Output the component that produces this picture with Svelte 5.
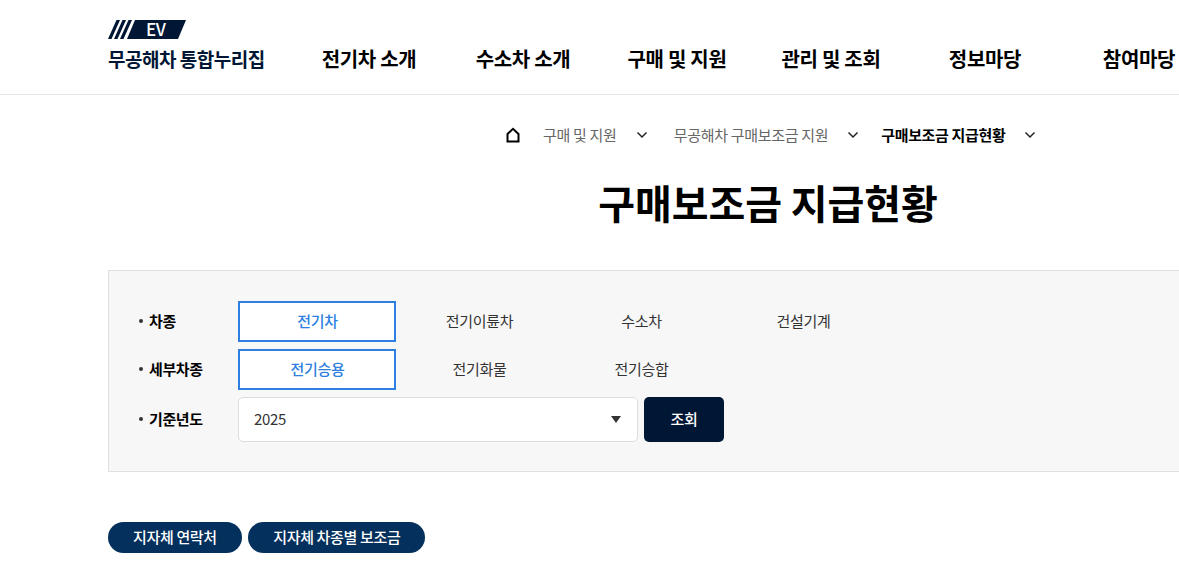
<script lang="ts">
  const menus = ["전기차 소개", "수소차 소개", "구매 및 지원", "관리 및 조회", "정보마당", "참여마당"];

  const crumbs = [
    { label: "구매 및 지원" },
    { label: "무공해차 구매보조금 지원" },
    { label: "구매보조금 지급현황", current: true },
  ];

  const kinds = ["전기차", "전기이륜차", "수소차", "건설기계"];
  const subKinds = ["전기승용", "전기화물", "전기승합"];
  const links = ["지자체 연락처", "지자체 차종별 보조금"];

  let kind = $state("전기차");
  let subKind = $state("전기승용");
</script>

<div class="page">
  <header class="header">
    <div class="header-inner">
      <a class="logo" href="#top">
        <span class="logo-mark">
          <svg width="78" height="19" viewBox="0 0 78 19">
            <path d="M0 19 L8.500 0 H12 L3.500 19 Z M6 19 L14.500 0 H18 L9.500 19 Z M12 19 L20.500 0 H24 L15.500 19 Z" fill="#001635" />
            <path d="M19 19 L27 0 H78 L70 19 Z" fill="#001635" />
          </svg>
          <span class="logo-ev">EV</span>
        </span>
        <span class="logo-text">무공해차 통합누리집</span>
      </a>
      <nav class="gnb">
        {#each menus as menu}
          <a class="gnb-item" href="#top">{menu}</a>
        {/each}
      </nav>
    </div>
  </header>

  <main class="content">
    <div class="breadcrumb">
      <svg class="home" width="16" height="16" viewBox="0 0 16 16">
        <path d="M2.500 14.500 V7 L8 1.800 L13.500 7 V14.500 Z" fill="none" stroke="#000" stroke-width="2" />
      </svg>
      {#each crumbs as crumb}
        <span class="crumb" class:current={crumb.current}>{crumb.label}</span>
        <svg class="chevron" width="12" height="8" viewBox="0 0 12 8">
          <path d="M1.500 1.500 L6 6 L10.500 1.500" fill="none" stroke="#222" stroke-width="1.500" />
        </svg>
      {/each}
    </div>

    <h1 class="title">구매보조금 지급현황</h1>

    <section class="search">
      <div class="row">
        <span class="label">차종</span>
        <div class="options">
          {#each kinds as item}
            <button class="option" class:active={kind === item} onclick={() => (kind = item)}>{item}</button>
          {/each}
        </div>
      </div>
      <div class="row">
        <span class="label">세부차종</span>
        <div class="options">
          {#each subKinds as item}
            <button class="option" class:active={subKind === item} onclick={() => (subKind = item)}>{item}</button>
          {/each}
        </div>
      </div>
      <div class="row">
        <span class="label">기준년도</span>
        <div class="select">
          <span>2025</span>
          <span class="caret"></span>
        </div>
        <button class="submit">조회</button>
      </div>
    </section>

    <div class="links">
      {#each links as link}
        <a class="pill" href="#top">{link}</a>
      {/each}
    </div>
  </main>
</div>

<style>
  :global(body) {
    overflow: hidden;
    background: #fff;
    font-family: "Noto Sans CJK KR", "Noto Sans", sans-serif;
    color: #111;
  }

  .page {
    width: 1179px;
    height: 579px;
    overflow: hidden;
  }

  .header {
    height: 94px;
    border-bottom: 1px solid #e8e8e8;
  }

  .header-inner {
    display: flex;
    align-items: flex-end;
    padding-left: 108px;
    width: 1320px;
    height: 72px;
  }

  .logo {
    display: flex;
    flex-direction: column;
    gap: 7px;
    flex: none;
    width: 184px;
    color: #001635;
    text-decoration: none;
  }

  .logo-mark {
    position: relative;
    display: block;
    height: 19px;
    width: 78px;
  }

  .logo-mark svg {
    display: block;
  }

  .logo-ev {
    position: absolute;
    left: 38px;
    top: -1px;
    font-size: 17px;
    line-height: 19px;
    letter-spacing: -0.5px;
    color: #fff;
    font-weight: 500;
  }

  .logo-text {
    font-size: 19px;
    line-height: 26px;
    font-weight: 700;
    letter-spacing: -0.5px;
    white-space: nowrap;
  }

  .gnb {
    display: flex;
  }

  .gnb-item {
    flex: none;
    width: 154px;
    font-size: 20px;
    line-height: 26px;
    font-weight: 700;
    letter-spacing: -0.3px;
    color: #000;
    text-align: center;
    text-decoration: none;
    white-space: nowrap;
  }

  .content {
    width: 1320px;
    margin-left: 108px;
  }

  .breadcrumb {
    display: flex;
    align-items: center;
    height: 40px;
    margin-top: 20px;
    padding-left: 397px;
  }

  .home {
    margin-right: 22px;
  }

  .crumb {
    padding-bottom: 2px;
    font-size: 15px;
    letter-spacing: -0.3px;
    color: #666;
    white-space: nowrap;
  }

  .crumb.current {
    margin-left: -4px;
    color: #000;
    font-weight: 700;
    letter-spacing: -0.35px;
  }

  .chevron {
    margin: 0 26px 0 19px;
  }

  .title {
    margin: 19px 0 0;
    text-align: center;
    font-size: 40px;
    line-height: 56px;
    font-weight: 700;
    letter-spacing: -0.1px;
    color: #000;
  }

  .search {
    display: flex;
    flex-direction: column;
    gap: 7px;
    margin-top: 40px;
    padding: 30px;
    height: 202px;
    box-sizing: border-box;
    background: #f7f7f7;
    border: 1px solid #e0e0e0;
  }

  .row {
    display: flex;
    align-items: center;
  }

  .label {
    display: flex;
    align-items: center;
    width: 99px;
    padding-bottom: 2px;
    font-size: 15px;
    font-weight: 700;
    letter-spacing: -0.4px;
    color: #000;
  }

  .label::before {
    content: "";
    width: 4px;
    height: 4px;
    margin-right: 6px;
    border-radius: 50%;
    background: #333;
  }

  .options {
    display: flex;
    gap: 4px;
  }

  .option {
    width: 158px;
    height: 41px;
    padding: 0 0 2px 1px;
    background: none;
    border: 2px solid transparent;
    font: inherit;
    font-size: 15px;
    letter-spacing: -0.3px;
    color: #333;
  }

  .option.active {
    background: #fff;
    border-color: #2e7fe0;
    color: #2e7fe0;
    font-weight: 500;
  }

  .select {
    display: flex;
    align-items: center;
    justify-content: space-between;
    box-sizing: border-box;
    width: 400px;
    height: 45px;
    padding: 0 16px 2px 15px;
    background: #fff;
    border: 1px solid #ddd;
    border-radius: 5px;
    font-size: 15px;
    letter-spacing: -0.3px;
    color: #333;
  }

  .caret {
    width: 0;
    height: 0;
    margin-top: 2px;
    border-left: 5px solid transparent;
    border-right: 5px solid transparent;
    border-top: 7px solid #333;
  }

  .submit {
    width: 80px;
    height: 45px;
    margin-left: 6px;
    padding: 0 0 2px;
    background: #001635;
    border: 0;
    border-radius: 5px;
    color: #fff;
    font: inherit;
    font-size: 15px;
    font-weight: 500;
    letter-spacing: -0.3px;
  }

  .links {
    display: flex;
    gap: 6.500px;
    margin-top: 50px;
  }

  .pill {
    display: flex;
    align-items: center;
    box-sizing: border-box;
    height: 31px;
    padding: 0 25px 2px;
    background: #03305c;
    border-radius: 16px;
    color: #fff;
    font-size: 15px;
    font-weight: 500;
    letter-spacing: -0.35px;
    text-decoration: none;
  }
</style>
